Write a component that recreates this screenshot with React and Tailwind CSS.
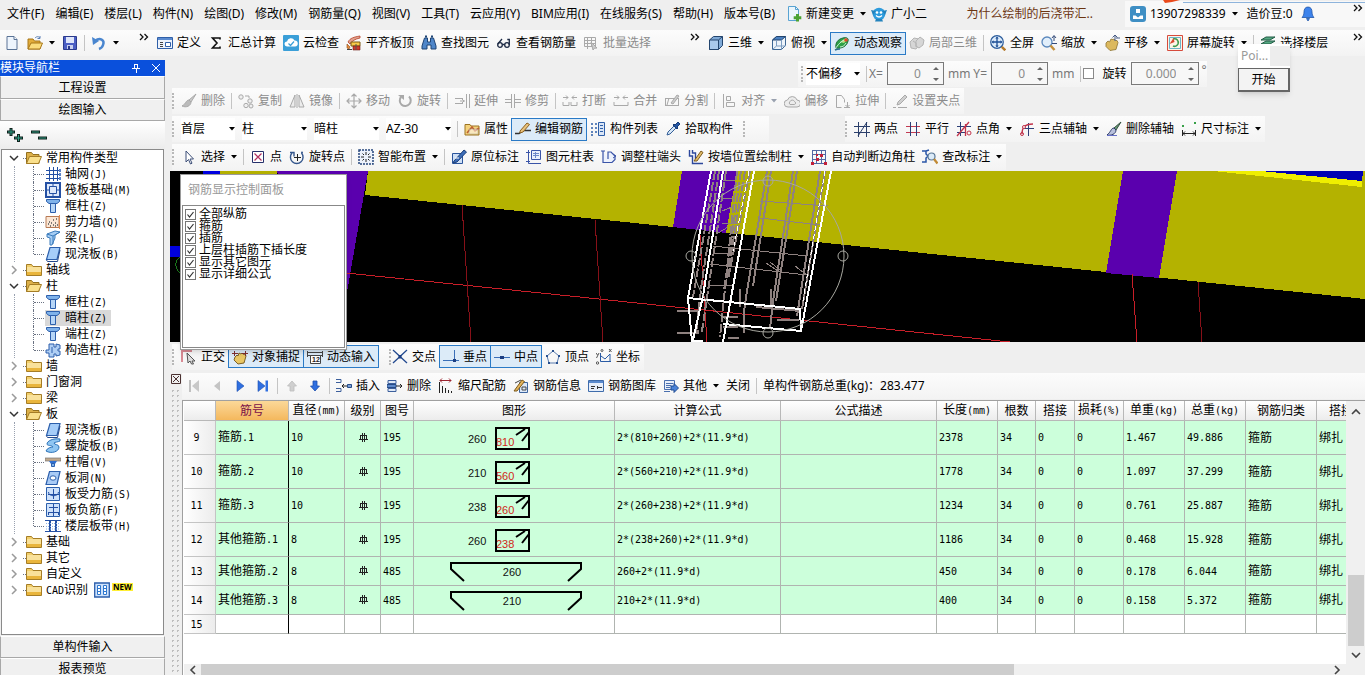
import React from "react";

const B = "#2f5fa8";
const G = "#a9a9a9";

const icons = {
  file: <><path d="M3 1.500h7l3 3v10H3z" fill="#eef5fd" stroke="#5a7396" /><path d="M10 1.500v3h3" fill="#fff" stroke="#5a7396" /></>,
  open: <><path d="M1 4h5l1.500 2H13v8H1z" fill="#e2ac3a" stroke="#a87718" /><path d="M1 14l3-6h11.500L13 14z" fill="#fbdc7c" stroke="#a87718" /><path d="M8 3c2-2 4-1.500 5 0m0-2v2.500h-2.500" fill="none" stroke="#5a7fb5" /></>,
  save: <><path d="M1.500 1.500h13v13h-13z" fill="#4c5fc4" stroke="#2b3a8c" /><path d="M4 2h8v6H4z" fill="#dfe6fa" /><path d="M5 10h6v4H5z" fill="#c9d0ee" /><path d="M6 11h2v3H6z" fill="#2b3a8c" /></>,
  undo: <><path d="M4 6c5-4 10-1 8 4-.6 2-2.500 3.500-4 4" fill="none" stroke="#4a86cf" strokeWidth="2.500" /><path d="M1 2l1 8 6-4z" fill="#4a86cf" /></>,
  define: <><path d="M.5 2.500h15v11H.5z" fill="#eef3fb" stroke={B} /><path d="M1 3h14v2H1z" fill="#5b8bd0" /><path d="M3 7.500h3M3 9.500h3M3 11.500h3" stroke="#444" /><path d="M8.500 7.500h5v4h-5z" fill="#fff" stroke={B} /></>,
  sigma: <path d="M12 4.500V3H4.500L9 8l-4.500 5H12v-1.500" fill="none" stroke="#111" strokeWidth="1.600" />,
  cloud: <><rect width="16" height="16" rx="1" fill="#3b9fd8" /><path d="M4 11.500a2.500 2.500 0 010-5 4 4 0 017.500-1 3 3 0 01.5 6z" fill="#fff" /><path d="M5.500 8.500l2 2 3.500-4" fill="none" stroke="#3b9fd8" strokeWidth="1.200" /></>,
  flat: <><path d="M2 7c2-4 6-5 12-6v2C9 4 6 6 4 9z" fill="#e0a08c" stroke="#b8432a" strokeWidth=".8" /><path d="M5 7h9v4H5z" fill="#f7c948" stroke="#7c5a13" /><path d="M7 11h7v4H7z" fill="#cf3a2c" stroke="#6b1c14" strokeWidth=".6" /><path d="M10 9v6" stroke="#555" /><path d="M1 9l3 3-1 2-2-1z" fill="#e88d3c" stroke="#8c4a12" strokeWidth=".6" /><path d="M1 14.500h5" stroke="#444" /></>,
  find: <><path d="M3.500 3h3v4h3V3h3l2.500 8v3h-5v-4H6v4H1v-3z" fill="#4f86c9" stroke="#1f4475" /><path d="M4 1.500h2M10 1.500h2" stroke="#1f4475" strokeWidth="2" /></>,
  glasses: <g fill="none" stroke="#1d2a44" strokeWidth="1.300"><circle cx="4" cy="10" r="2.300" /><circle cx="11" cy="10" r="2.300" /><path d="M6.300 9.500h2.400M1.800 9L6 4M13.300 10V4.500h-2" /></g>,
  batch: <><path d="M1.500 2.500h11v9h-11zM1 5.500h11M1 8.500h11M4.500 2v12M8.500 2v9" fill="none" stroke={G} /><path d="M8 7l6 6-2.500.2L10 15z" fill="#ccc" stroke={G} /></>,
  newdoc: <><path d="M2.500.5h7l3 3v11h-10z" fill="#eaf5fc" stroke="#59a3d2" /><path d="M9.500.5v3h3" fill="none" stroke="#59a3d2" /><path d="M11.500 8v7.500M7.700 11.800h7.600" stroke="#4aa233" strokeWidth="3" /></>,
  mascot: <><circle cx="8" cy="8" r="6.300" fill="#2d9bdc" /><path d="M0 4l5 1-3 4zM16 4l-5 1 3 4zM5 13l-1 2.500h8L11 13z" fill="#2383bd" /><circle cx="6" cy="6.500" r="1.300" fill="#fff" /><circle cx="10" cy="6.500" r="1.300" fill="#fff" /><path d="M5 9.500c2 2 4 2 6 0" fill="none" stroke="#fff" strokeWidth="1.200" /></>,
  user: <><rect width="16" height="16" rx="3" fill="#3f8fc4" /><path d="M6 3h4v4H6z" fill="#fff" /><path d="M3 13V9.500h2.500L8 11.500l2.500-2H13V13z" fill="#fff" /></>,
  bell: <path d="M8 1c-3 0-4 2.500-4 5 0 3-1 4-2 5.500h12C13 10 12 9 12 6c0-2.500-1-5-4-5zM6.500 12.500h3L8 15z" fill="#3d83ec" stroke="#2257a8" strokeWidth=".8" />,
  cube: <><path d="M1.500 5l4-3.500h9v9l-4 4h-9z" fill="#7fa9d6" stroke="#24456e" /><path d="M1.500 5h9v9.500h-9z" fill="#a9c9ec" stroke="#24456e" /><path d="M10.500 5l4-3.500" stroke="#24456e" /></>,
  cubetop: <><path d="M1.500 5l4-3.500h9v9l-4 4h-9z" fill="#eef4fa" stroke="#3c6694" /><path d="M1.500 5l4-3.500h9l-4 3.500z" fill="#4a80c0" stroke="#24456e" /><path d="M10.500 5v9.500M5.500 5v6l-4 3.500M5.500 11h9" fill="none" stroke="#7c9cc0" /></>,
  orbit: <><path d="M2 13c-1-5 2-9 7-10 3-1 6 0 5 3-1 5-6 8-12 7z" fill="#2fa048" stroke="#1b6b34" /><path d="M6 7l6-4 1.500 1.500L10 8z" fill="#b7e07f" /><path d="M1 15c1-3 5-8 9-10M6 12c3 0 5-2 6-4" fill="none" stroke="#cfeeda" /><circle cx="12" cy="5" r="1.800" fill="#e2492f" /><path d="M1 15c2-1 3-1 5-1" stroke="#2c6f8c" strokeWidth="1.500" fill="none" /></>,
  local3d: <g fill="#d6d6d6" stroke="#b4b4b4"><path d="M1 7l4-4 5 1 1 5-4 5-5-1z" /><path d="M7 6l4-4 4 3-1 5-4 3-3-2z" /><path d="M4 6l3 2v4" fill="none" /></g>,
  full: <><circle cx="7" cy="7" r="6.300" fill="#dcebfa" stroke="#2b5c9b" strokeWidth="1.200" /><path d="M7 2.500v9M2.500 7h9" stroke="#1d4f96" strokeWidth="1.300" /><path d="M7 1.500l-1.700 2h3.400zM7 12.500l-1.700-2h3.400zM1.500 7l2-1.700v3.400zM12.500 7l-2-1.700v3.400z" fill="#1d4f96" /><path d="M11.800 11.800l3.500 3.500" stroke="#b57a2c" strokeWidth="2.500" /></>,
  zoom: <><circle cx="6" cy="7" r="5" fill="#e2effb" stroke="#5b88bd" strokeWidth="1.300" /><path d="M9.500 10.500l4 4.500" stroke="#c4903c" strokeWidth="2.500" /><path d="M13 1v5M11 3l2-2.500L15 3M11 8.500h5" fill="none" stroke="#334a78" /></>,
  hand: <><path d="M2 8l2-2 1.500 1L7 4l2 .5 1-.5 1.500 1.500L13 5.500l1 2-2 7-6 1-4-4z" fill="#dcb95e" stroke="#8d7230" strokeWidth=".8" /><path d="M11 0v6M8.500 2.500L11 0l2.500 2.500M12 3h4" fill="none" stroke="#475a84" /></>,
  screenrot: <><path d="M.5.500h15v15H.5z" fill="#fdf4e8" stroke="#d64b3c" /><path d="M2.500 2.500h11v11h-11z" fill="none" stroke="#6cb4c9" /><path d="M6 4c4-1 6 2 5 5-1 2-3 3-5 2" fill="none" stroke="#3f9a4c" strokeWidth="1.600" /><path d="M2.500 9l4-6 1 4z" fill="#d8462f" /></>,
  floors: <><path d="M1 5l5-3h9l-5 3zM1 9l5-3h9l-5 3z" fill="#56a882" stroke="#225c46" /><path d="M1 13l5-3h9l-5 3z" fill="#7cc4a4" stroke="#225c46" /></>,
  brushGray: <><path d="M15 1L8 7l2 2z" fill="#c9c9c9" stroke={G} /><path d="M8 7c-3 0-3 4-7 6 4 2 9 0 9-4z" fill="#bbb" stroke={G} /></>,
  copyG: <g fill="#efefef" stroke={G}><circle cx="3" cy="4" r="2.200" /><circle cx="12" cy="8" r="2.200" /><circle cx="8" cy="12.500" r="2.200" /><circle cx="13" cy="13" r="2" /><path d="M7 3h4v2" fill="none" /></g>,
  mirrorG: <path d="M6 2v12H1zM10 2v12h5zM8 1v14" fill="#ececec" stroke={G} />,
  moveG: <path d="M8 1v14M1 8h14M5.500 3.500L8 1l2.500 2.500M5.500 12.500L8 15l2.500-2.500M3.500 5.500L1 8l2.500 2.500M12.500 5.500L15 8l-2.500 2.500" fill="none" stroke={G} strokeWidth="1.200" />,
  rotG: <><path d="M4 4a5.500 5.500 0 108-.5" fill="none" stroke={G} strokeWidth="2" /><path d="M1 2h6v5z" fill={G} /></>,
  extG: <path d="M1 5.500h8M1 10.500h8M6 8h5M12.500 1v14M15.500 1v14M8 6l2 2-2 2" fill="none" stroke={G} />,
  trimG: <path d="M0 6.500h6M10 6.500h6M0 9.500h6M10 9.500h6M6.500 1v14M9.500 1v14" fill="none" stroke={G} />,
  breakG: <path d="M1 4.500h5M10 4.500h5M4 2.500l2 2-2 2M12 2.500l-2 2 2 2M1 9v3.500h6V9M15 9v3.500H9V9" fill="none" stroke={G} />,
  mergeG: <path d="M1 4.500h5M10 4.500h5M4 2.500l2 2-2 2M12 2.500l-2 2 2 2M1 9v3.500h14V9" fill="none" stroke={G} />,
  splitG: <><path d="M1 5.500h14M1 12.500h14M1.500 5v7M14.500 5v7M5 5l-2 7" fill="none" stroke={G} /><path d="M7 10l6-8 2 1-6 8z" fill="#ccc" stroke={G} /></>,
  alignG: <path d="M2.500 1v14M5.500 3.500h4v4h-4zM5.500 9.500h8v4h-8z" fill="none" stroke={G} />,
  offsetG: <><path d="M4 14a3.500 3.500 0 01-.5-7A5 5 0 0113 7a3.500 3.500 0 010 7z" fill="#ececec" stroke={G} /><path d="M6 11.500a2 2 0 010-3 2.500 2.500 0 014.500 0 1.600 1.600 0 010 3z" fill="none" stroke={G} /></>,
  stretchG: <path d="M1.500 14.500v-12h5l3 4v3M1.500 14.500h5M9 14.500h6M12.500 9v5M10.500 12l2 2 2-2" fill="none" stroke={G} />,
  gripG: <><path d="M6 9l7-7 2 2-7 7-3 1z" fill="#d0d0d0" stroke={G} /><path d="M1 14.500h3M6 14.500h9" stroke={G} /></>,
  prop: <><path d="M1 3.500h5l1 1.500h8v9H1z" fill="#f4d27c" stroke="#9c7320" /><path d="M3 12l5-6 3 4 4-3" fill="none" stroke="#c15f2e" strokeWidth="1.600" /><path d="M5 8h9v5H5z" fill="#fff" opacity=".5" stroke="#7b8ea8" strokeWidth=".6" /></>,
  editbar: <><path d="M0 12.500h4l4-3h8" fill="none" stroke="#333" strokeWidth="1.500" /><path d="M5 10l7-8 2.500 1.500L8 11l-3 1z" fill="#e8c27c" stroke="#8c6020" /></>,
  list: <><path d="M1 3h2M1 7h2M1 11h2M1 14h2M5 3h2M5 7h2M5 11h2" stroke={B} strokeWidth="1.400" /><path d="M8.500 1.500h6v13h-6z" fill="#dbe6f6" stroke={B} /><path d="M10 4.500h3M10 7.500h3M10 10.500h3" stroke={B} /></>,
  pick: <><path d="M2 14l1-3 6-6 2 2-6 6z" fill="#d6e6f6" stroke="#355f98" /><path d="M8 4l4 4 1-1-1-1 3-3-2-2-3 3-1-1z" fill="#2456a4" stroke="#173c77" /></>,
  twopt: <><path d="M0 5.500h16M0 11.500h16M4.500 1v15M12.500 1v15" stroke="#2b3f6b" /><path d="M13 1L4 15" stroke="#2b3f6b" /></>,
  parallel: <><path d="M1 5.500h14M1 11.500h14" stroke="#c23a52" /><path d="M5.500 1v14M11.500 1v14" stroke="#2c3f78" /></>,
  angle: <><path d="M1 5.500h14M4.500 1v14M1 11.500h9" stroke="#2c3f78" /><path d="M1 15L13 1M9.500 3v12" stroke="#c2334b" strokeWidth="1.300" /><circle cx="13" cy="12" r="2" fill="none" stroke="#c2334b" /></>,
  arc3: <><path d="M9.500 2v13M5 7.500h10" stroke="#2c3f78" /><path d="M3 13c0-6 2-10 11-10" fill="none" stroke="#c2334b" strokeWidth="1.300" /><circle cx="3" cy="13" r="1.500" fill="none" stroke="#c2334b" /><circle cx="5" cy="6" r="1.500" fill="#fff" stroke="#c2334b" /></>,
  brush: <><path d="M15 1L8 7l2 2z" fill="#6a9c78" stroke="#345040" /><path d="M8 7c-3 0-3 4-7 7 4 1 9-1 9-5z" fill="#b8c0dc" stroke="#2b3868" /><path d="M1 14.500h10" stroke="#6670c8" /></>,
  dim: <><path d="M1.500 9v6M14.500 9v6M2 12.500h12M4 10.500l-2 2 2 2M12 10.500l2 2-2 2" fill="none" stroke="#222" /><path d="M1 5h2M13 2h2" stroke="#38a048" strokeWidth="2" /></>,
  cursor: <path d="M5 2v11l2.500-2.500L9.500 15l1.500-.8-2-4.200h3.500z" fill="#fff" stroke="#3d4f78" />,
  point: <><path d="M2.500 2.500h11v11h-11z" fill="#fff" stroke="#26306b" /><path d="M4.500 4.500l7 7M11.500 4.500l-7 7" stroke="#b03060" strokeWidth="1.200" /></>,
  rotpt: <><path d="M3 4a6.300 6.300 0 109.500 0M1 3.500h4v4" fill="none" stroke="#34568c" strokeWidth="1.400" /><path d="M8.500 5v7M5 8.500h7" stroke="#222" /><circle cx="13" cy="3.500" r="1" fill="#34568c" /></>,
  smart: <><path d="M1 1h14v14H1z" fill="#edf2fb" stroke="#26457c" strokeDasharray="2 1" strokeWidth="1.500" /><path d="M8 3v3M8 10v3M3 8h3M10 8h3M4.500 4.500l1.500 1.500M11.500 4.500L10 6M4.500 11.500L6 10M11.500 11.500L10 10" stroke="#222" /></>,
  annot: <><path d="M1.500 4.500h10v10h-10z" fill="#cfe0f6" stroke="#2b559c" /><path d="M3 12L13 1l2.500 2L6 13l-4 1z" fill="#3c6db8" stroke="#1d3f78" /><path d="M4 9h4" stroke="#fff" /></>,
  coltab: <><path d="M5.500 1.500h9v9h-9z" fill="#e8eefc" stroke="#3a54a8" /><path d="M7 4.500h6M7 6.500h6M9.500 3v6" stroke="#6c87c9" /><path d="M2.500 1v13.500H15M0 3.500h4M0 12.500h4" fill="none" stroke="#3a54a8" /></>,
  colend: <><path d="M2 2v11.500h9l3-3V7l-4-4H7v7" fill="#edf2fd" stroke="#3a54a8" strokeWidth="1.200" /><path d="M0 2h4M12 5l3 2-3 2" fill="none" stroke="#3a54a8" /></>,
  wallcol: <><path d="M1.500 1v6h3v7.500H15M4.500 1v3h3v6" fill="none" stroke="#2d489c" strokeWidth="1.400" /><path d="M6 12l7-10 2 1.500L9 12z" fill="#e2bd6a" stroke="#7d5a1b" /></>,
  corner: <><path d="M1 1.500h14M1 5.500h14M1 10.500h14M1 14.500h14M1.500 1v14M5.500 1v14M10.500 1v14M14.500 1v14" stroke="#5068a4" /><path d="M0 13h3v3H0zM5 5h2v2H5zM9 5h3v3H9zM13 13h3v3h-3zM5 9h3v3H5z" fill="#c21f3a" /></>,
  check: <><path d="M0 2h4v3l2 2-2 2v4H0M4 2l3-1" fill="none" stroke="#2a56a8" strokeWidth="1.500" /><circle cx="9.500" cy="7.500" r="3.500" fill="#dcebf8" stroke="#5a7898" strokeWidth="1.200" /><path d="M12 10l3.500 4.500" stroke="#c18a35" strokeWidth="2.300" /></>,
  ortho: <><path d="M1 1v12M1 2h10" stroke="#d98a94" strokeWidth="2" /><path d="M6 4l8 8-3 0 1.500 3h-2L9 12l-2 2z" fill="#ddd" stroke="#555" /></>,
  snap: <><path d="M3 8l2-2 1 1 1-3 2 1 1-1 1.500 1.500L13 5l1 2-2 7-6 1-4-4z" fill="#e9c765" stroke="#7d6126" /><path d="M0 4.500h6M10 4.500h6M2.500 2v5M13.500 2v5" stroke="#813232" /></>,
  dyn: <><path d="M0 3.500h16M0 6.500h4M13 6.500h3M.5 2v6M15.500 2v6" stroke="#444" /><path d="M3.500 6.500h10v8h-10z" fill="#fff" stroke="#444" /><text x="5" y="13" fontSize="7" fontWeight="bold" fill="#222" fontFamily="Liberation Sans">12</text></>,
  cross: <><path d="M1 1l14 13M15 1L1 14" stroke="#234a90" strokeWidth="1.300" /><path d="M6.500 6h3v3.500h-3z" fill="#1c3e82" /></>,
  perp: <><path d="M11.500 1v11M0 11.500h16" stroke="#3a6fb8" /><path d="M10 10h3v3h-3z" fill="#1c3e82" /></>,
  mid: <><path d="M0 8.500h16" stroke="#3a6fb8" /><path d="M6 7h4v3H6z" fill="#1c3e82" /></>,
  vertex: <><path d="M8 2l6 5-2 7H4L2 7z" fill="none" stroke="#5a7db0" /><path d="M7 1h2v2H7zM1 6h2v2H1zM13 6h2v2h-2zM3 13h2v2H3zM11 13h2v2h-2z" fill="#27508f" /></>,
  coord: <><path d="M4.500 4v8.500H15M5 7l4 3 5-5v8" fill="none" stroke="#2b5ca5" /><circle cx="6" cy="1.500" r="1" fill="none" stroke="#555" /><circle cx="1.500" cy="14" r="1.200" fill="none" stroke="#555" /><path d="M0 4l1.500 2M3 4L.5 9M13 0l2.500 3M15.500 0L13 3" stroke="#555" /></>,
  first: <><path d="M3 2h2v12H3z" fill="#c0c0c0" /><path d="M13 2v12L6 8z" fill="#c8c8c8" /></>,
  prev: <path d="M11 3v10L5 8z" fill="#c4c4c4" />,
  next: <path d="M5 2.500v11l7-5.500z" fill="#2f6fe0" stroke="#1d4fae" strokeWidth=".6" />,
  last: <><path d="M3 2.500v11L10 8z" fill="#2f6fe0" stroke="#1d4fae" strokeWidth=".6" /><path d="M10.500 2.500H13v11h-2.500z" fill="#2f6fe0" /></>,
  up: <path d="M8 3l4.500 5H10v5H6V8H3.500z" fill="#cfcfcf" stroke="#bdbdbd" strokeWidth=".8" />,
  down: <path d="M8 13L3.500 8H6V3h4v5h2.500z" fill="#2f6fe0" stroke="#1d4fae" strokeWidth=".8" />,
  insert: <><path d="M0 1.500h5v3H0M0 10.500h5v3H0" fill="none" stroke="#3c5f9c" /><path d="M11.500 6.500h4v3h-4z" fill="#7ca1d8" stroke="#274c88" /><path d="M11 8H6M8 6L6 8l2 2" fill="none" stroke="#222" /></>,
  del: <><path d="M1 2.500h8v3H1zM1 10.500h8v3H1z" fill="#e0e9f6" stroke="#3c5f9c" /><path d="M0 6.500h9v3H0z" fill="#5f8acb" stroke="#274c88" /><path d="M9 8h6M13 6l2 2-2 2" fill="none" stroke="#222" /></>,
  scale: <><path d="M2 2.500h11M4 .5l-2 2 2 2M11 .5l2 2-2 2" fill="none" stroke="#9c2430" /><path d="M1.500 4v11M4.500 8v7M7.500 10v5M10.500 12v3M13.500 13v2" stroke="#222" /></>,
  info: <><path d="M6.500 4.500h8v10h-8z" fill="#dce8f8" stroke="#3d659f" /><path d="M1 13L9 2l2.500 1.500L4 13z" fill="#e3b45c" stroke="#7d5a1b" /><path d="M2 5l6-3M9 9h4v3H9z" fill="none" stroke="#444" /></>,
  lib: <><path d="M.5 2.500h15v11H.5z" fill="#e6eefa" stroke="#3f6cab" /><path d="M1 3h14v2H1z" fill="#5a8ace" /><path d="M3 8.500h4M3 10.500h3M9 9.500h5M9.500 8v3" stroke="#333" /></>,
  other: <><path d="M1.500 2.500h10v9h-10z" fill="#e8effb" stroke="#4a6fae" /><path d="M3 5.500h7M3 7.500h5M3 9.500h4M1 13.500h6" stroke="#4a6fae" /><path d="M8 8h3V5.500l4.500 4.500-4.500 4.500V12H8z" fill="#4a82d8" stroke="#214c92" /></>,
  folder: <><path d="M.5 2.500h5l1.500 2h8.500v9H.5z" fill="#f2cf6b" stroke="#a57d26" /><path d="M1 5h14v5H1z" fill="#f9e19a" /><path d="M1 10h14v3H1z" fill="#e9b53c" /></>,
  folderOpen: <><path d="M.5 2.500h5l1.500 2H13v9H.5z" fill="#dcb04a" stroke="#93701f" /><path d="M.5 13.500l3-7h12l-3 7z" fill="#fae08c" stroke="#a57d26" /></>,
  grid: <><path d="M1 4.500h14M1 8.500h14M1 12.500h14M4.500 1v14M8.500 1v14M12.500 1v14" stroke="#2450a4" fill="none" /><path d="M14 3h2v3h-2zM14 7h2v3h-2zM14 11h2v3h-2z" fill="#5b82c8" /></>,
  raft: <><path d="M1 1h14v14H1z" fill="#dfe9fb" stroke="#2450a4" strokeWidth="2" /><path d="M4.500 4.500h7v7h-7zM8 1v4M8 11v4M1 8h4M11 8h4" fill="none" stroke="#2450a4" /></>,
  column: <><path d="M1.500 1.500h13v2L12 5.500H4L1.500 3.500z" fill="#7fb2ea" stroke="#2c5fac" /><path d="M5.500 5.500h5v9h-5z" fill="#b7d6f7" stroke="#2c5fac" /></>,
  shear: <><path d="M1 2.500h13v11H1z" fill="#fbe6d4" stroke="#b87a54" /><path d="M3 10h1M4 8h1M6 9h1M8 6h1M5 12h1M10 9h1M8 11h1M11 5h1M12 11h1M10 12h1" stroke="#555" strokeWidth="1.300" /><path d="M14.500 1v14" stroke="#e28b52" /></>,
  beam: <><path d="M2 4l8-3 5 1-5 3v3l-3 7H5V8L2 7z" fill="#a5cdf4" stroke="#3c7cbc" /><path d="M2 4l6 2 7-4M8 6v8" fill="none" stroke="#3c7cbc" /></>,
  slab: <><path d="M5 1.500h10L12 13.500H1.500z" fill="#a5cdf9" stroke="#2c5fac" strokeWidth="1.200" /><path d="M1.500 14l1 1.500h10L15 4" fill="none" stroke="#24498c" /></>,
  struct: <><path d="M4 2h5v3h2V2l4 1v4h-2v2h2v4l-4 1v-2H9v3H4v-4H1V8h3z" fill="#b0cff4" stroke="#2c5fac" /><path d="M7 5v6" stroke="#2c5fac" /></>,
  spiral: <path d="M15 1C8 0 2 3 2 6c0 2 5 1 6 3-2 0-6 1-7 4 5 3 13 1 13-4 0-3-5-2-5-4 1-1 4-1 6-2z" fill="#8fc6f2" stroke="#2c72b8" />,
  cap: <><path d="M0 4h16v3H0z" fill="#c3aa8c" stroke="#777" strokeWidth=".7" /><path d="M4 7h8l-2 3H6z" fill="#2f6fd0" /><path d="M6.500 9.500h3v3h-3z" fill="#7fb2ea" stroke="#2c5fac" /></>,
  hole: <><path d="M4.500 1.500H15L12 14.500H1z" fill="#a9cbf6" stroke="#2c5fac" strokeWidth="1.200" /><ellipse cx="8" cy="8" rx="3" ry="2.200" fill="#fff" stroke="#2c5fac" /></>,
  force: <><path d="M1.500 1.500h13v13h-13z" fill="#cfe2fb" stroke="#2c5fac" /><path d="M8.500 3v10M3.500 6c0 5 10 5 10 0M3 8.500h11" fill="none" stroke="#2450a4" /></>,
  neg: <><path d="M1.500 1.500h13v13h-13z" fill="#cfe2fb" stroke="#2c5fac" /><path d="M8.500 2v12M4 5.500h9M3 10.500h11M3.500 10v3M13.500 10v3" fill="none" stroke="#2450a4" /></>,
  band: <><path d="M0 2.500h16M0 13.500h16" stroke="#2450a4" /><path d="M5 3v10M11 3v10" stroke="#2450a4" strokeWidth="2" /><path d="M1 5.500h14M1 8.500h14M1 11h14" stroke="#8fb2e6" strokeDasharray="1 1" /></>,
  cad: <><path d="M.7 1h14.600v14H.7z" fill="#cfe2fb" stroke="#2c5fac" strokeWidth="1.300" /><path d="M3.500 3.500h3v9h-3zM9.500 3.500h3v9h-3z" fill="#fff" stroke="#2f78d0" /><path d="M4 6.500h2M4 9.500h2M10 6.500h2M10 9.500h2" stroke="#2f78d0" /></>,
};

function Icon({ n }) {
  return <svg className="size-4 shrink-0" viewBox="0 0 16 16" aria-hidden="true">{icons[n]}</svg>;
}
function Arrow({ gray }) {
  return <svg className={`ml-0.5 h-1 w-1.5 shrink-0 ${gray ? "text-gray-400" : "text-black"}`} viewBox="0 0 6 4" aria-hidden="true"><path d="M0 0h6L3 3.500z" fill="currentColor" /></svg>;
}
function Tool({ i, t, on, off, arrow }) {
  return (
    <button
      type="button"
      disabled={off}
      className={`flex shrink-0 items-center gap-1 whitespace-nowrap ${off ? "text-[#8c8c8c]" : "text-black"} ${on ? "-mx-1 h-[23px] border border-[#2a7ac6] bg-[#dcebf8] px-[3px]" : ""}`}
    >
      {i && <Icon n={i} />}
      {t && <span>{t}</span>}
      {arrow && <Arrow gray={off} />}
    </button>
  );
}
const Sep = () => <span className="-mx-px h-4 w-px shrink-0 bg-[#c4c4c4]" />;
const Grip = () => <span className="h-4 w-0 shrink-0 border-l-2 border-dotted border-[#b8b8b8]" />;
const More = ({ className = "" }) => (
  <svg className={`h-2 w-2.5 shrink-0 ${className}`} viewBox="0 0 10 8" aria-hidden="true"><path d="M1 1l3 3-3 3M5.500 1l3 3-3 3" fill="none" stroke="#111" strokeWidth="1.300" /></svg>
);
function Bar({ children, className = "" }) {
  return <div role="toolbar" className={`flex h-[26px] shrink-0 items-center gap-[7px] bg-linear-to-b from-[#fcfcfc] to-[#f3f3f3] ${className}`}>{children}</div>;
}
function Combo({ label, value, wide }) {
  return (
    <label className={`flex h-[22px] shrink-0 items-center bg-white ${wide ? "w-[65px]" : "w-[54px]"}`}>
      <select aria-label={label} className="-mr-3 min-w-0 flex-1 appearance-none bg-transparent outline-none">
        <option>{value}</option>
      </select>
      <Arrow />
    </label>
  );
}
function Spin({ label, value, wide }) {
  return (
    <span className={`flex h-[23px] shrink-0 items-center border border-[#7a7a7a] bg-[#f7f7f7] ${wide ? "w-[68px]" : "w-[57px]"}`}>
      <input aria-label={label} defaultValue={value} className="min-w-0 flex-1 bg-transparent pr-3 text-right text-[#8c8c8c] outline-none" />
      <svg className="mr-1 h-4 w-1.5 shrink-0" viewBox="0 0 6 16" aria-hidden="true"><path d="M0 4h6L3 1zM0 12h6l-3 3z" fill="#666" /></svg>
    </span>
  );
}
/* Latin runs sit on a half-width grid beside full-width Chinese glyphs. */
function Grid({ children }) {
  return String(children).split(/([\x20-\x7e]+)/).map((s, k) =>
    /^[\x20-\x7e]+$/.test(s) ? <span key={k} className="whitespace-pre font-['DejaVu_Sans_Mono',monospace] text-[10px]">{s}</span> : s
  );
}

const menus = ["文件(F)", "编辑(E)", "楼层(L)", "构件(N)", "绘图(D)", "修改(M)", "钢筋量(Q)", "视图(V)", "工具(T)", "云应用(Y)", "BIM应用(I)", "在线服务(S)", "帮助(H)", "版本号(B)"];

const tree = [
  { t: "常用构件类型", c: [["grid", "轴网(J)"], ["raft", "筏板基础(M)"], ["column", "框柱(Z)"], ["shear", "剪力墙(Q)"], ["beam", "梁(L)"], ["slab", "现浇板(B)"]] },
  { t: "轴线" },
  { t: "柱", c: [["column", "框柱(Z)"], ["column", "暗柱(Z)", true], ["column", "端柱(Z)"], ["struct", "构造柱(Z)"]] },
  { t: "墙" },
  { t: "门窗洞" },
  { t: "梁" },
  { t: "板", c: [["slab", "现浇板(B)"], ["spiral", "螺旋板(B)"], ["cap", "柱帽(V)"], ["hole", "板洞(N)"], ["force", "板受力筋(S)"], ["neg", "板负筋(F)"], ["band", "楼层板带(H)"]] },
  { t: "基础" },
  { t: "其它" },
  { t: "自定义" },
  { t: "CAD识别", isNew: true },
];

function Tree() {
  return (
    <ul className="min-h-0 flex-1 overflow-hidden border border-[#8a8a8a] bg-white">
      {tree.map((g) => (
        <li key={g.t}>
          <div className="flex h-4 items-center pl-[7px]">
            <svg className="size-2.5 shrink-0" viewBox="0 0 10 10" aria-hidden="true">
              {g.c ? <path d="M1 3l4 4 4-4" fill="none" stroke="#333" strokeWidth="1.500" /> : <path d="M3 1l4 4-4 4" fill="none" stroke="#9a9a9a" strokeWidth="1.500" />}
            </svg>
            <span className="ml-1 w-[3px] border-t border-dotted border-gray-500" />
            <Icon n={g.c ? "folderOpen" : "folder"} />
            <button type="button" className="ml-1 flex items-center whitespace-nowrap leading-4"><span><Grid>{g.t}</Grid></span></button>
            {g.isNew && (
              <>
                <span className="ml-1.5 flex"><Icon n="cad" /></span>
                <span className="mb-1.5 ml-0.5 bg-[#ffee33] px-px text-[8px] leading-2 font-bold">NEW</span>
              </>
            )}
          </div>
          {g.c && (
            <ul className="ml-3 border-l border-dotted border-gray-400 pl-[18px]">
              {g.c.map(([i, t, sel], k) => (
                <li key={t} className="flex h-4 items-center">
                  <span className={`border-l border-dotted border-gray-500 ${k === g.c.length - 1 ? "mb-2 h-2" : "h-4"}`} />
                  <span className="mr-px w-2.5 border-t border-dotted border-gray-500" />
                  <button type="button" className={`flex h-4 items-center gap-1 pr-1 whitespace-nowrap leading-4 ${sel ? "bg-[#d9d9d9]" : ""}`}>
                    <Icon n={i} />
                    <span><Grid>{t}</Grid></span>
                  </button>
                </li>
              ))}
            </ul>
          )}
        </li>
      ))}
    </ul>
  );
}

function Scene() {
  return (
    <svg className="h-full w-full" viewBox="0 0 1195 171" preserveAspectRatio="xMinYMin slice" role="img" aria-label="三维视图" shapeRendering="crispEdges">
      <rect width="1195" height="171" fill="#000" />
      <path d="M33 0h17v3H33zM0 75h12v11H0z" fill="#0000e0" />
      <path d="M10 86c-5 4-6 10 0 16" fill="none" stroke="#1c7a1c" />
      <path d="M50 0h57v3H50z" fill="#b4b000" />
      <path d="M107 0h91l-22 127h-40z" fill="#5a00ae" />
      <path d="M198 0h997v128L195 24z" fill="#b4b200" />
      <path d="M512 0h55l-11 62-53-6z" fill="#5a00ae" />
      <path d="M953 0h54l-18 107-53-5z" fill="#5a00ae" />
      <path d="M1043 0h48l101 10v6z" fill="#efee00" />
      <path d="M1091 0h102l-1 10z" fill="#0000b4" />
      <g stroke="#c81e28" fill="none"><path d="M176 102L400 125l440 46M530 64l7 107M962 103l5 68" /></g>
      <g stroke="#861018" fill="none"><path d="M292 34l9 137M425 49l8 122M1028 111l4 60" /></g>
      <g stroke="#8f8280" strokeWidth="2" fill="none">
        <path d="M545 0l-22 126M549 0l-17 110-6 52M556 0l-24 160h-6M567 0l-17 166M571 0l-17 120M575 0l-20 118M580 0l-22 108" strokeDasharray="9 2" />
        <path d="M597 0l-20 120-3 20v22M601 0l-18 115M623 0l-20 130-3 28M627 0l-21 130M650 0l-23 145M655 0l-23 138" />
      </g>
      <g stroke="#8f8280" fill="none">
        <path d="M553 9h12M553 27h12M552 52h16M543 75l94 10M540 93l97 11M538 114h24M590 30l68 5M590 47l60 7M548 62l10-6M596 92l12 8M600 91l10 8M625 95l12 9M552 40l10-4M543 82h16" />
        <path d="M570 118v18M601 118v16M586 136l44 4M607 149h22M507 140h22M507 162h22M553 146h15M553 156h15M558 167h11" strokeWidth="2" />
      </g>
      <g stroke="#fff" strokeWidth="2" fill="none">
        <path d="M541 0l-23 127 4 43h11M553 0l-20 125-10 44M584 0l-31 171M661 0l-30 160-78-7M518 127l112 11 1 22" />
        <path d="M655 0l-22 130M579 0l-16 80" strokeDasharray="5 3" strokeWidth="1" />
      </g>
      <g stroke="#a8a8a0" fill="none" shapeRendering="auto">
        <circle cx="598" cy="85" r="76" /><circle cx="598" cy="10" r="5" /><circle cx="598" cy="162" r="5" /><circle cx="521" cy="85" r="5" /><circle cx="673" cy="85" r="5" />
      </g>
    </svg>
  );
}

const checks = ["全部纵筋", "箍筋", "插筋", "上层柱插筋下插长度", "显示其它图元", "显示详细公式"];

function RebarPanel() {
  return (
    <section aria-label="钢筋显示控制面板" className="absolute top-[3px] left-2.5 z-10 flex h-[176px] w-[167px] flex-col border border-[#9a9a9a] bg-white px-px pb-px shadow-md">
      <h2 className="py-[5px] pl-1.5 leading-5 text-[#999]">钢筋显示控制面板</h2>
      <ul className="flex-1 border border-[#888] pt-0.5 pl-0.5">
        {checks.map((c) => (
          <li key={c}>
            <label className="flex h-3 items-center gap-[3px] whitespace-nowrap leading-3">
              <span className="grid size-[11px] shrink-0">
                <input type="checkbox" defaultChecked className="col-start-1 row-start-1 size-[11px] appearance-none border border-[#777] bg-white" />
                <svg className="pointer-events-none col-start-1 row-start-1 size-[11px]" viewBox="0 0 11 11" aria-hidden="true"><path d="M2.500 5.500l2 2.500 4-5" fill="none" stroke="#333" strokeWidth="1.200" /></svg>
              </span>
              {c}
            </label>
          </li>
        ))}
      </ul>
    </section>
  );
}

const head = ["", "筋号", "直径(mm)", "级别", "图号", "图形", "计算公式", "公式描述", "长度(mm)", "根数", "搭接", "损耗(%)", "单重(kg)", "总重(kg)", "钢筋归类", "搭接形式"];
const cols = ["w-[32px]", "w-[73px]", "w-[56px]", "w-[36px]", "w-[33px]", "w-[201px]", "w-[166px]", "w-[156px]", "w-[61px]", "w-[38px]", "w-[39px]", "w-[49px]", "w-[61px]", "w-[61px]", "w-[71px]", "w-[71px]"];
const rows = [
  [9, "箍筋.1", "10", "195", ["260", "810"], "2*(810+260)+2*(11.9*d)", "2378", "1.467", "49.886"],
  [10, "箍筋.2", "10", "195", ["210", "560"], "2*(560+210)+2*(11.9*d)", "1778", "1.097", "37.299"],
  [11, "箍筋.3", "10", "195", ["238", "260"], "2*(260+238)+2*(11.9*d)", "1234", "0.761", "25.887"],
  [12, "其他箍筋.1", "8", "195", ["260", "238"], "2*(238+260)+2*(11.9*d)", "1186", "0.468", "15.928"],
  [13, "其他箍筋.2", "8", "485", ["260"], "260+2*(11.9*d)", "450", "0.178", "6.044"],
  [14, "其他箍筋.3", "8", "485", ["210"], "210+2*(11.9*d)", "400", "0.158", "5.372"],
];

function Grade() {
  return <svg className="mx-auto h-2.5 w-[9px]" viewBox="0 0 9 10" role="img" aria-label="HRB400" shapeRendering="crispEdges"><path d="M1.500 2.500h6v4h-6zM0 6.500h9M3.500 0v9M5.500 0v9" fill="none" stroke="#222" /></svg>;
}
function Shape({ v }) {
  if (v.length === 2)
    return (
      <svg className="block h-[33px] w-[200px]" viewBox="0 0 200 33" fontFamily="Liberation Sans" fontSize="11">
        <text x="54" y="22" fill="#111">{v[0]}</text>
        <text x="82" y="25" fill="#d02818">{v[1]}</text>
        <path d="M82 7h33v21H82zM102 14l9-6M108 20l7-9" fill="none" stroke="#000" strokeWidth="2" />
      </svg>
    );
  return (
    <svg className="block h-7 w-[200px]" viewBox="0 0 200 28" fontFamily="Liberation Sans" fontSize="11">
      <path d="M50 24L37 12V6h130v6l-13 12" fill="none" stroke="#000" strokeWidth="2" />
      <text x="98" y="19" textAnchor="middle" fill="#111">{v[0]}</text>
    </svg>
  );
}

function RebarTable() {
  const cell = "overflow-hidden border-r border-b border-[#b0b4b0] p-0 pl-0.5 whitespace-nowrap";
  const num = "border-r border-b border-[#c4c4c4] bg-linear-to-r from-white to-[#ececec] p-0 pr-1.5 text-center font-normal";
  return (
    <table className="w-[1204px] table-fixed border-separate border-spacing-0 leading-4">
      <colgroup>{cols.map((c, k) => <col key={k} className={c} />)}</colgroup>
      <thead>
        <tr className="h-5">
          {head.map((h, k) => (
            <th key={k} scope="col" className={`overflow-hidden border-r border-b border-[#b8b8b8] p-0 font-normal whitespace-nowrap ${k === 1 ? "bg-linear-to-b from-[#fbd898] to-[#f4b85c] text-[#7a1048]" : "bg-linear-to-b from-white to-[#ececec]"} ${k === 15 ? "pl-3 text-left" : ""}`}>
              <Grid>{h}</Grid>
            </th>
          ))}
        </tr>
      </thead>
      <tbody>
        {rows.map(([n, name, d, fig, shape, f, len, w, total]) => (
          <tr key={n} className={`bg-[#ccffdb] ${shape.length === 2 ? "h-[34px]" : "h-[29px]"}`}>
            <th scope="row" className={num}><Grid>{n}</Grid></th>
            <td className={`${cell} border-r-black`}><Grid>{name}</Grid></td>
            <td className={cell}><Grid>{d}</Grid></td>
            <td className={cell}><Grade /></td>
            <td className={cell}><Grid>{fig}</Grid></td>
            <td className="overflow-hidden border-r border-b border-[#b0b4b0] p-0"><Shape v={shape} /></td>
            <td className={cell}><Grid>{f}</Grid></td>
            <td className={cell}></td>
            <td className={cell}><Grid>{len}</Grid></td>
            <td className={cell}><Grid>34</Grid></td>
            <td className={cell}><Grid>0</Grid></td>
            <td className={cell}><Grid>0</Grid></td>
            <td className={cell}><Grid>{w}</Grid></td>
            <td className={cell}><Grid>{total}</Grid></td>
            <td className={cell}>箍筋</td>
            <td className={cell}>绑扎</td>
          </tr>
        ))}
        <tr className="h-[19px]">
          <th scope="row" className={num}><Grid>15</Grid></th>
          {cols.slice(1).map((_, k) => <td key={k} className={`${cell} ${k === 0 ? "border-r-black" : ""}`}></td>)}
        </tr>
      </tbody>
    </table>
  );
}

function Chevron({ d }) {
  return <svg className="size-2.5 shrink-0" viewBox="0 0 10 10" aria-hidden="true"><path d={d} fill="none" stroke="#444" strokeWidth="1.600" /></svg>;
}

export default function App() {
  return (
    <div className="relative flex h-screen flex-col overflow-hidden bg-[#efefef] font-['Noto_Sans','Noto_Sans_CJK_SC',sans-serif] text-xs leading-4 text-black">
      <header className="flex h-7 shrink-0 items-center">
        <nav className="flex shrink-0 items-center gap-[11px] pl-[7px]">
          {menus.map((m) => <button key={m} type="button" className="whitespace-nowrap">{m}</button>)}
        </nav>
        <div className="flex shrink-0 items-center gap-[5px] pl-[11px]">
          <Tool i="newdoc" t="新建变更" arrow />
          <Tool i="mascot" t="广小二" />
        </div>
        <a href="#news" className="ml-auto shrink-0 text-[#6b3410]">为什么绘制的后浇带汇..</a>
        <div className="ml-8 flex h-[26px] w-[240px] shrink-0 items-center gap-[7px] bg-[#f8f8f8] pl-[5px]">
          <Tool i="user" t="13907298339" arrow />
          <span className="pl-0.5">造价豆:0</span>
          <Tool i="bell" />
          <More className="mr-0.5 mb-3 ml-auto" />
        </div>
      </header>

      <div className="mb-0.5 flex h-[30px] shrink-0 items-center">
        <Bar className="w-[151px] pl-1">
          <Tool i="file" />
          <Tool i="open" arrow />
          <Tool i="save" />
          <Sep />
          <Tool i="undo" arrow />
          <More className="mr-0.5 mb-3 ml-auto" />
        </Bar>
        <Bar className="w-[553px] pl-1.5">
          <Tool i="define" t="定义" />
          <Tool i="sigma" t="汇总计算" />
          <Tool i="cloud" t="云检查" />
          <Tool i="flat" t="平齐板顶" />
          <Tool i="find" t="查找图元" />
          <Tool i="glasses" t="查看钢筋量" />
          <Tool i="batch" t="批量选择" off />
          <More className="mr-1 mb-3 ml-auto" />
        </Bar>
        <Bar className="min-w-0 flex-1 pl-1">
          <Tool i="cube" t="三维" arrow />
          <Tool i="cubetop" t="俯视" arrow />
          <Tool i="orbit" t="动态观察" on />
          <Tool i="local3d" t="局部三维" off />
          <Sep />
          <Tool i="full" t="全屏" />
          <Tool i="zoom" t="缩放" arrow />
          <Tool i="hand" t="平移" arrow />
          <Tool i="screenrot" t="屏幕旋转" arrow />
          <Sep />
          <Tool i="floors" t="选择楼层" />
          <More className="mr-0.5 mb-3 ml-auto" />
        </Bar>
      </div>

      <div className="flex min-h-0 flex-1">
        <aside className="flex w-[165px] shrink-0 flex-col">
          <div className="flex h-4 shrink-0 items-center bg-[#0a50dc] pr-1 text-white">
            <h1 className="flex-1">模块导航栏</h1>
            <svg className="size-2.5" viewBox="0 0 10 10" aria-hidden="true"><path d="M3.500 1v4.500M6.500 1v4.500M3 1.500h4M1 5.500h8M5.500 6v4" fill="none" stroke="#fff" /></svg>
            <svg className="ml-2.5 size-2.5" viewBox="0 0 10 10" aria-hidden="true"><path d="M1 1l8 8M9 1L1 9" stroke="#fff" /></svg>
          </div>
          <button type="button" className="h-[23px] shrink-0 border border-t-white border-[#a8a8a8] bg-[#f0f0f0]">工程设置</button>
          <button type="button" className="h-[22px] shrink-0 border border-t-white border-[#a8a8a8] bg-[#f0f0f0]">绘图输入</button>
          <div className="flex h-7 shrink-0 items-center gap-2 bg-linear-to-b from-white to-[#ececec] pl-[7px]">
            <button type="button" aria-label="展开"><svg className="block size-4" viewBox="0 0 16 16"><path d="M0 5h8M4 1v8M7 11h9M11.500 7v8" stroke="#10201c" strokeWidth="3" /><path d="M1 5h6M4 2v6M8 11h7M11.500 8v6" stroke="#2c9a80" /></svg></button>
            <button type="button" aria-label="折叠"><svg className="block size-4" viewBox="0 0 16 16"><path d="M0 5h9M7 11h9" stroke="#10201c" strokeWidth="3" /><path d="M1 5h7M8 11h7" stroke="#2c9a80" /></svg></button>
          </div>
          <div className="flex min-h-0 flex-1 flex-col px-px"><Tree /></div>
          <button type="button" className="mt-px h-[22px] shrink-0 border border-t-white border-[#a8a8a8] bg-[#f0f0f0]">单构件输入</button>
          <div className="h-[17px] shrink-0 overflow-hidden">
            <button type="button" className="h-[22px] w-full border border-t-white border-[#a8a8a8] bg-[#f0f0f0]">报表预览</button>
          </div>
        </aside>

        <main className="flex min-w-0 flex-1 flex-col pl-[5px]">
          <div className="flex h-[27px] shrink-0 items-center pl-[628px]">
            <Bar className="pl-[3px]">
              <Grip />
              <span className="-ml-1"><Combo label="偏移方式" value="不偏移" /></span>
              <Sep />
              <label className="-ml-1 flex items-center gap-1 text-[#777]">X=<Spin label="X" value="0" /><span>mm</span></label>
              <label className="-ml-1 flex items-center gap-1 text-[#777]">Y=<Spin label="Y" value="0" /><span>mm</span></label>
              <Sep />
              <label className="-ml-1 flex items-center gap-2">
                <input type="checkbox" className="size-[11px] appearance-none border border-[#888] bg-white" />旋转
              </label>
              <span className="-ml-0.5 flex gap-0.5 text-[#777]"><Spin label="旋转角度" value="0.000" wide />°</span>
            </Bar>
          </div>

          <div className="flex h-7 shrink-0 items-center pl-0.5">
            <Bar className="pr-1">
              <Grip />
              <Tool i="brushGray" t="删除" off /><Sep />
              <Tool i="copyG" t="复制" off /><Tool i="mirrorG" t="镜像" off /><Sep />
              <Tool i="moveG" t="移动" off /><Tool i="rotG" t="旋转" off /><Sep />
              <Tool i="extG" t="延伸" off /><Tool i="trimG" t="修剪" off /><Sep />
              <Tool i="breakG" t="打断" off /><Tool i="mergeG" t="合并" off /><Tool i="splitG" t="分割" off /><Sep />
              <Tool i="alignG" t="对齐" off arrow /><Tool i="offsetG" t="偏移" off /><Tool i="stretchG" t="拉伸" off /><Sep />
              <Tool i="gripG" t="设置夹点" off />
            </Bar>
          </div>

          <div className="flex h-7 shrink-0 items-center pl-0.5">
            <Bar className="w-[571px]">
              <Grip />
              <Combo label="楼层" value="首层" />
              <Combo label="构件类别" value="柱" wide />
              <Combo label="构件类型" value="暗柱" wide />
              <Combo label="构件" value="AZ-30" wide />
              <Sep />
              <Tool i="prop" t="属性" />
              <Tool i="editbar" t="编辑钢筋" on />
              <Tool i="list" t="构件列表" />
              <Tool i="pick" t="拾取构件" />
            </Bar>
            <Bar className="w-[26px]"><Grip /></Bar>
            <Bar className="ml-[76px] pr-1">
              <Grip />
              <Tool i="twopt" t="两点" />
              <Tool i="parallel" t="平行" />
              <Tool i="angle" t="点角" arrow />
              <Tool i="arc3" t="三点辅轴" arrow />
              <Tool i="brush" t="删除辅轴" />
              <Tool i="dim" t="尺寸标注" arrow />
            </Bar>
          </div>

          <div className="flex h-7 shrink-0 items-center pl-0.5">
            <Bar className="pr-1">
              <Grip />
              <Tool i="cursor" t="选择" arrow /><Sep />
              <Tool i="point" t="点" /><Tool i="rotpt" t="旋转点" /><Sep />
              <Tool i="smart" t="智能布置" arrow /><Sep />
              <Tool i="annot" t="原位标注" />
              <Tool i="coltab" t="图元柱表" />
              <Tool i="colend" t="调整柱端头" />
              <Tool i="wallcol" t="按墙位置绘制柱" arrow />
              <Tool i="corner" t="自动判断边角柱" />
              <Tool i="check" t="查改标注" arrow />
            </Bar>
          </div>

          <div className="relative h-[171px] shrink-0">
            <Scene />
            <RebarPanel />
          </div>

          <div className="flex h-[29px] shrink-0 items-center pl-0.5">
            <Bar className="pr-1">
              <Grip />
              <Tool i="ortho" t="正交" />
              <Tool i="snap" t="对象捕捉" on />
              <Tool i="dyn" t="动态输入" on />
              <span />
              <Grip />
              <span className="-ml-1.5 flex items-center gap-[7px]">
                <Tool i="cross" t="交点" />
                <Tool i="perp" t="垂点" on />
                <Tool i="mid" t="中点" on />
                <Tool i="vertex" t="顶点" />
                <Tool i="coord" t="坐标" />
              </span>
            </Bar>
          </div>

          <div className="flex min-h-0 flex-1">
            <div className="flex w-[12px] shrink-0 flex-col pt-[3px]">
              <button type="button" aria-label="关闭面板"><svg className="ml-px block size-2.5" viewBox="0 0 10 10"><path d="M.5.500h9v9h-9zM2 2l6 6M8 2L2 8" fill="none" stroke="#4a3030" /></svg></button>
              <div className="mt-1 flex-1 bg-[radial-gradient(circle,#bdbdbd_1px,transparent_1px)] bg-size-[5px_5px]" />
            </div>
            <div className="flex min-w-0 flex-1 flex-col">
              <div className="flex h-[29px] shrink-0 items-center">
                <Bar className="flex-1 pl-1">
                  <Tool i="first" off /><Tool i="prev" off /><Tool i="next" /><Tool i="last" />
                  <Sep />
                  <Tool i="up" off /><Tool i="down" />
                  <Sep />
                  <Tool i="insert" t="插入" />
                  <Tool i="del" t="删除" />
                  <Tool i="scale" t="缩尺配筋" />
                  <Tool i="info" t="钢筋信息" />
                  <Tool i="lib" t="钢筋图库" />
                  <Tool i="other" t="其他" arrow />
                  <Tool t="关闭" />
                  <Sep />
                  <span>单构件钢筋总重(kg)：283.477</span>
                </Bar>
              </div>
              <div className="flex min-h-0 flex-1 border-t border-l border-[#a0a0a0] bg-white pl-px">
                <div className="flex min-w-0 flex-1 flex-col">
                  <div className="min-h-0 flex-1 overflow-hidden"><RebarTable /></div>
                  <div className="flex h-[11px] shrink-0 items-center bg-[#f0f0f0]">
                    <span className="flex w-[17px] shrink-0 justify-center"><Chevron d="M7 1L3 5l4 4" /></span>
                    <span className="h-full w-[70%] bg-[#cdcdcd]" />
                    <span className="ml-auto flex w-[18px] shrink-0 justify-center"><Chevron d="M3 1l4 4-4 4" /></span>
                  </div>
                </div>
                <div className="flex w-[19px] shrink-0 flex-col items-center bg-[#f0f0f0]">
                  <span className="pt-1.5"><Chevron d="M1 7l4-4 4 4" /></span>
                  <span className="mt-auto h-[71px] w-4 bg-[#cdcdcd]" />
                  <span className="pt-1 pb-[15px]"><Chevron d="M1 3l4 4 4-4" /></span>
                </div>
              </div>
            </div>
          </div>
        </main>
      </div>

      <svg className="absolute top-0 right-0 h-[3px] w-[202px]" viewBox="0 0 202 3" aria-hidden="true"><path d="M0 0h17l-8 2-7 1z" fill="#ea4a1c" /><path d="M20 2.500h182" stroke="#8eb4dc" /></svg>
      <section aria-label="Point" className="absolute top-11 right-[75px] z-10 flex w-[52px] flex-col bg-white shadow-md">
        <div className="flex h-6 items-center justify-between pl-[3px] text-[#999]"><span>Poi...</span><span className="h-5 w-5 bg-[#ededed]" /></div>
        <button type="button" className="h-6 border border-r-2 border-b-2 border-[#666] bg-[#f3f3f3]">开始</button>
      </section>
    </div>
  );
}
